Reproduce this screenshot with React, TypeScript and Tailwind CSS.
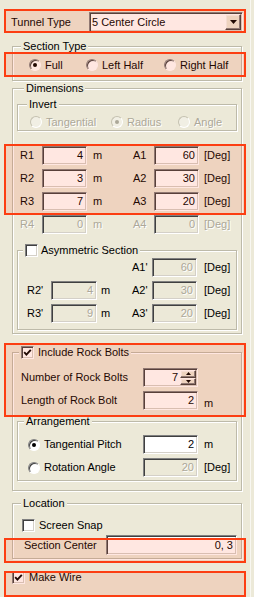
import React from "react";

const sunken =
  "border border-t-[#808080] border-l-[#808080] border-b-white border-r-white shadow-[inset_1px_1px_0_#404040,inset_-1px_-1px_0_#d4d0c8]";
const raised =
  "border border-t-white border-l-white border-b-[#404040] border-r-[#404040] shadow-[inset_-1px_-1px_0_#808080,inset_1px_1px_0_#f4f3ee] bg-[#ece9d8]";
const dis = "text-[#aca899] [text-shadow:1px_1px_0_#ffffff]";
const groupCls =
  "border border-[#bdbaa9] shadow-[inset_1px_1px_0_#ffffff,1px_1px_0_#ffffff]";

function Field({
  value,
  className,
  disabled,
}: {
  value: string;
  className: string;
  disabled?: boolean;
}) {
  return (
    <div
      className={`${sunken} ${className} flex items-center justify-end pr-[3px] ${
        disabled ? "bg-[#ece9d8] " + dis : "bg-white text-black"
      }`}
    >
      {value}
    </div>
  );
}

function Check({ checked }: { checked?: boolean }) {
  return (
    <div
      className={`${sunken} w-[13px] h-[13px] shrink-0 bg-white flex items-center justify-center`}
    >
      {checked && (
        <svg width="9" height="9" viewBox="0 0 9 9">
          <path d="M1.2 4.2 L3.4 6.6 L7.8 1.8" stroke="#000" strokeWidth="1.9" fill="none" />
        </svg>
      )}
    </div>
  );
}

function Radio({ checked, disabled }: { checked?: boolean; disabled?: boolean }) {
  return (
    <div
      className={`w-[12px] h-[12px] shrink-0 rounded-full border flex items-center justify-center ${
        disabled
          ? "border-t-[#c4c1b0] border-l-[#c4c1b0] border-b-white border-r-white bg-[#f1efe4]"
          : "border-t-[#808080] border-l-[#808080] border-b-white border-r-white bg-white shadow-[inset_1px_1px_0_#404040]"
      }`}
    >
      {checked && (
        <div
          className={`w-[4px] h-[4px] rounded-full ${disabled ? "bg-[#aca899]" : "bg-black"}`}
        />
      )}
    </div>
  );
}

function RadioItem({
  label,
  checked,
  disabled,
  className,
}: {
  label: string;
  checked?: boolean;
  disabled?: boolean;
  className?: string;
}) {
  return (
    <div className={`flex items-center gap-[4px] ${className ?? ""}`}>
      <Radio checked={checked} disabled={disabled} />
      <span className={disabled ? dis : ""}>{label}</span>
    </div>
  );
}

function Legend({ children, className }: { children: React.ReactNode; className: string }) {
  return (
    <div
      className={`-mt-[7px] h-[13px] leading-[13px] w-fit px-[2px] bg-[#ece9d8] flex items-center ${className}`}
    >
      {children}
    </div>
  );
}

function RRow({
  r,
  rv,
  a,
  av,
  disabled,
  className,
}: {
  r: string;
  rv: string;
  a: string;
  av: string;
  disabled?: boolean;
  className?: string;
}) {
  return (
    <div className={`flex items-center h-[19px] pl-[7px] ${className ?? ""}`}>
      <span className={`w-[22px] ${disabled ? dis : ""}`}>{r}</span>
      <Field value={rv} className="w-[45px] h-[19px]" disabled={disabled} />
      <span className={`ml-[6px] w-[40px] ${disabled ? dis : ""}`}>m</span>
      <span className={`w-[21px] ${disabled ? dis : ""}`}>{a}</span>
      <Field value={av} className="w-[45px] h-[19px]" disabled={disabled} />
      <span className={`ml-[5px] ${disabled ? dis : ""}`}>[Deg]</span>
    </div>
  );
}

function Arrow({ up }: { up?: boolean }) {
  return (
    <svg width="5" height="3" viewBox="0 0 5 3">
      <path d={up ? "M0 3 L2.5 0 L5 3 Z" : "M0 0 L5 0 L2.5 3 Z"} fill="#000" />
    </svg>
  );
}

export default function App() {
  return (
    <div className="relative w-[254px] h-[597px] overflow-hidden bg-[#ece9d8] text-[11px] leading-[13px] text-black font-['Liberation_Sans',Arial,sans-serif]">
      <div className="w-[251px] h-[597px] border-r border-r-[#f8f7f1] flex flex-col">
        {/* Tunnel Type */}
        <div className="mt-[12px] flex items-center h-[20px] pl-[11px]">
          <span className="w-[78px]">Tunnel Type</span>
          <div className={`${sunken} w-[154px] h-[20px] bg-white flex items-stretch p-[1px]`}>
            <div className="flex-1 flex items-center pl-[1px]">5 Center Circle</div>
            <div className={`${raised} w-[16px] flex items-center justify-center`}>
              <svg width="7" height="4" viewBox="0 0 7 4">
                <path d="M0 0 L7 0 L3.5 4 Z" fill="#000" />
              </svg>
            </div>
          </div>
        </div>

        {/* Section Type */}
        <div className={`${groupCls} mt-[14px] ml-[12px] w-[230px] pb-[8px]`}>
          <Legend className="ml-[8px]">Section Type</Legend>
          <div className="mt-[5px] h-[14px] flex items-center pl-[16px]">
            <RadioItem label="Full" checked className="w-[57px]" />
            <RadioItem label="Left Half" className="w-[78px]" />
            <RadioItem label="Right Half" />
          </div>
        </div>

        {/* Dimensions */}
        <div className={`${groupCls} mt-[7px] ml-[12px] w-[230px] pb-[3px]`}>
          <Legend className="ml-[11px]">Dimensions</Legend>
          <div className={`${groupCls} mt-[9px] ml-[4px] w-[220px] pb-[1px]`}>
            <Legend className="ml-[9px]">Invert</Legend>
            <div className="mt-[4px] h-[14px] flex items-center pl-[12px]">
              <RadioItem label="Tangential" disabled className="w-[81px]" />
              <RadioItem label="Radius" disabled checked className="w-[67px]" />
              <RadioItem label="Angle" disabled />
            </div>
          </div>
          <RRow r="R1" rv="4" a="A1" av="60" className="mt-[15px]" />
          <RRow r="R2" rv="3" a="A2" av="30" className="mt-[4px]" />
          <RRow r="R3" rv="7" a="A3" av="20" className="mt-[4px]" />
          <RRow r="R4" rv="0" a="A4" av="0" disabled className="mt-[4px]" />

          <div className={`${groupCls} mt-[16px] ml-[4px] w-[220px] pb-[6px]`}>
            <div className="-mt-[7px] ml-[5px] h-[13px] w-fit px-[2px] bg-[#ece9d8] flex items-center gap-[3px]">
              <Check />
              <span>Asymmetric Section</span>
            </div>
            <div className="mt-[1px] h-[19px] flex items-center pl-[114px]">
              <span className="w-[20px]">A1'</span>
              <Field value="60" disabled className="w-[45px] h-[19px]" />
              <span className="ml-[7px]">[Deg]</span>
            </div>
            <div className="mt-[4px] h-[19px] flex items-center pl-[9px]">
              <span className="w-[24px]">R2'</span>
              <Field value="4" disabled className="w-[46px] h-[19px]" />
              <span className="ml-[4px] w-[31px]">m</span>
              <span className="w-[20px]">A2'</span>
              <Field value="30" disabled className="w-[45px] h-[19px]" />
              <span className="ml-[7px]">[Deg]</span>
            </div>
            <div className="mt-[4px] h-[19px] flex items-center pl-[9px]">
              <span className="w-[24px]">R3'</span>
              <Field value="9" disabled className="w-[46px] h-[19px]" />
              <span className="ml-[4px] w-[31px]">m</span>
              <span className="w-[20px]">A3'</span>
              <Field value="20" disabled className="w-[45px] h-[19px]" />
              <span className="ml-[7px]">[Deg]</span>
            </div>
          </div>
        </div>

        {/* Rock Bolts */}
        <div className={`${groupCls} mt-[18px] ml-[12px] w-[230px] pb-[9px]`}>
          <div className="-mt-[7px] ml-[6px] h-[13px] w-fit px-[2px] bg-[#ece9d8] flex items-center gap-[4px]">
            <Check checked />
            <span>Include Rock Bolts</span>
          </div>
          <div className="mt-[9px] h-[19px] flex items-center pl-[8px]">
            <span className="w-[122px]">Number of Rock Bolts</span>
            <div className={`${sunken} w-[55px] h-[19px] bg-white flex items-stretch p-[1px]`}>
              <div className="flex-1 flex items-center justify-end pr-[2px]">7</div>
              <div className="w-[16px] flex flex-col">
                <div className={`${raised} flex-1 flex items-center justify-center`}>
                  <Arrow up />
                </div>
                <div className={`${raised} flex-1 flex items-center justify-center`}>
                  <Arrow />
                </div>
              </div>
            </div>
          </div>
          <div className="mt-[4px] h-[19px] flex items-center pl-[8px]">
            <span className="w-[122px]">Length of Rock Bolt</span>
            <Field value="2" className="w-[55px] h-[19px]" />
            <span className="ml-[6px] mt-[5px]">m</span>
          </div>

          <div className={`${groupCls} mt-[11px] ml-[4px] w-[220px] pb-[3px]`}>
            <Legend className="ml-[6px]">Arrangement</Legend>
            <div className="mt-[7px] h-[19px] flex items-center pl-[10px]">
              <RadioItem label="Tangential Pitch" checked className="w-[115px]" />
              <Field value="2" className="w-[55px] h-[19px]" />
              <span className="ml-[6px]">m</span>
            </div>
            <div className="mt-[4px] h-[19px] flex items-center pl-[10px]">
              <RadioItem label="Rotation Angle" className="w-[115px]" />
              <Field value="20" disabled className="w-[55px] h-[19px]" />
              <span className="ml-[6px]">[Deg]</span>
            </div>
          </div>
        </div>

        {/* Location */}
        <div className={`${groupCls} mt-[12px] ml-[12px] w-[230px] pb-[3px]`}>
          <Legend className="ml-[8px]">Location</Legend>
          <div className="mt-[9px] h-[13px] flex items-center gap-[4px] pl-[9px]">
            <Check />
            <span>Screen Snap</span>
          </div>
          <div className="mt-[3px] h-[20px] flex items-center pl-[11px]">
            <span className="w-[82px]">Section Center</span>
            <Field value="0, 3" className="w-[131px] h-[20px]" />
          </div>
        </div>

        {/* Make Wire */}
        <div className="mt-[12px] h-[13px] flex items-center gap-[4px] pl-[12px]">
          <Check checked />
          <span>Make Wire</span>
        </div>
      </div>

      {/* Highlight annotations */}
      <div className="absolute left-[4px] top-[9px] w-[242px] h-[24px] border-2 border-[#fc3e12] bg-[rgba(255,70,20,0.13)] pointer-events-none" />
      <div className="absolute left-[4px] top-[52px] w-[242px] h-[25px] border-2 border-[#fc3e12] bg-[rgba(255,70,20,0.13)] pointer-events-none" />
      <div className="absolute left-[4px] top-[144px] w-[242px] h-[71px] border-2 border-[#fc3e12] bg-[rgba(255,70,20,0.13)] pointer-events-none" />
      <div className="absolute left-[4px] top-[343px] w-[242px] h-[74px] border-2 border-[#fc3e12] bg-[rgba(255,70,20,0.13)] pointer-events-none" />
      <div className="absolute left-[4px] top-[538px] w-[242px] h-[25px] border-2 border-[#fc3e12] bg-[rgba(255,70,20,0.13)] pointer-events-none" />
      <div className="absolute left-[4px] top-[571px] w-[242px] h-[26px] border-2 border-[#fc3e12] bg-[rgba(255,70,20,0.13)] pointer-events-none" />
    </div>
  );
}
